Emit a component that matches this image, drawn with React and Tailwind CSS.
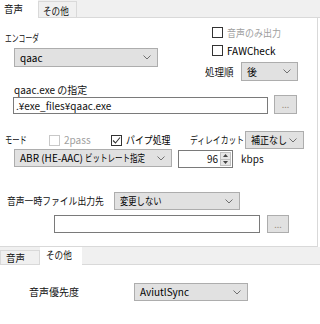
import React from "react";

const FONT = "font-['Noto_Sans_CJK_JP','Noto_Sans',sans-serif]";

function S({ s = "", children }) {
  return <span className={`inline-block origin-left whitespace-nowrap ${s}`}>{children}</span>;
}

function Chevron() {
  return (
    <svg width="8" height="5" viewBox="0 0 8 5" className="shrink-0">
      <path d="M0.5 0.5 L4 4 L7.5 0.5" fill="none" stroke="#707070" strokeWidth="1" />
    </svg>
  );
}

function Combo({ children, className = "" }) {
  return (
    <div
      className={`flex items-center border border-[#adadad] bg-[#e1e1e1] pl-[5px] pr-[6px] text-black leading-none ${className}`}
    >
      <div className="flex-1 min-w-0 whitespace-nowrap">{children}</div>
      <Chevron />
    </div>
  );
}

function Check({ checked, disabled, grayText, children, className = "" }) {
  return (
    <div className={`flex items-center gap-[4px] ${className}`}>
      <div
        className={`w-[11px] h-[11px] border bg-white flex items-center justify-center shrink-0 ${
          disabled ? "border-[#c8c8c8]" : "border-[#333333]"
        }`}
      >
        {checked && (
          <svg width="9" height="9" viewBox="0 0 9 9">
            <path d="M1 4.5 L3.5 7 L8 1.5" fill="none" stroke="#333" strokeWidth="1.1" />
          </svg>
        )}
      </div>
      <div className={`leading-none whitespace-nowrap ${disabled || grayText ? "text-[#a0a0a0]" : "text-black"}`}>
        {children}
      </div>
    </div>
  );
}

function Btn({ className = "" }) {
  return (
    <div
      className={`flex items-center justify-center border border-[#adadad] bg-[#e1e1e1] text-[#9a8f80] text-[9px] leading-none ${className}`}
    >
      ...
    </div>
  );
}

function Spin() {
  return (
    <div className="ml-[6px] mt-[1px] w-[55px] h-[18px] border border-[#7a7a7a] bg-white flex items-stretch">
      <div className="flex-1 flex items-center justify-end pr-[2px] leading-none">96</div>
      <div className="w-[11px] flex flex-col my-[1px] mr-[1px]">
        <div className="flex-1 bg-[#e6e6e6] border border-[#c0c0c0] flex items-center justify-center">
          <svg width="5" height="3" viewBox="0 0 5 3"><path d="M0 3 L2.5 0 L5 3Z" fill="#444" /></svg>
        </div>
        <div className="flex-1 bg-[#e6e6e6] border border-[#c0c0c0] border-t-0 flex items-center justify-center">
          <svg width="5" height="3" viewBox="0 0 5 3"><path d="M0 0 L2.5 3 L5 0Z" fill="#444" /></svg>
        </div>
      </div>
    </div>
  );
}

export default function App() {
  return (
    <div className={`w-[320px] h-[324px] bg-white text-[10px] text-[#111] overflow-hidden ${FONT}`}>
      {/* top tab strip */}
      <div className="h-[18px] flex bg-[#f0f0f0]">
        <div className="w-[38px] h-[18px] bg-white pl-[4px] pt-[3px] leading-[12px]">
          <S s="scale-x-[0.95]">音声</S>
        </div>
        <div className="flex-1 flex flex-col">
          <div className="flex h-[17px] mt-[1px]">
            <div className="w-[39px] border border-b-0 border-[#d9d9d9] bg-[#f0f0f0] pl-[4px] pt-[3px] leading-[12px]">
              <S s="scale-x-[0.86]">その他</S>
            </div>
          </div>
          <div className="h-0 border-t border-[#d9d9d9]" />
        </div>
      </div>

      {/* panel */}
      <div className="w-[318px] h-[229px] border-r border-b border-[#d9d9d9] bg-white">
        {/* row 1 */}
        <div className="flex h-[62px]">
          <div className="w-[205px] flex flex-col">
            <div className="mt-[14px] h-[12px] leading-[12px] pl-[5px]">
              <S s="scale-x-[0.68]">エンコーダ</S>
            </div>
            <Combo className="mt-[4px] ml-[14px] w-[144px] h-[19px]">qaac</Combo>
          </div>
          <div className="flex flex-col">
            <Check grayText className="mt-[9px] ml-[7px] h-[11px]">
              <S s="scale-x-[0.9]">音声のみ出力</S>
            </Check>
            <Check className="mt-[7px] ml-[7px] h-[11px]">FAWCheck</Check>
            <div className="flex items-center mt-[6px]">
              <span className="w-[36px] leading-none">
                <S s="scale-x-[0.95]">処理順</S>
              </span>
              <Combo className="w-[57px] h-[19px]">後</Combo>
            </div>
          </div>
        </div>

        {/* row 2 */}
        <div className="mt-[4px] h-[12px] leading-[12px] pl-[14px]">qaac.exe の指定</div>
        <div className="flex items-end mt-[-1px] h-[19px]">
          <div className="ml-[13px] w-[255px] h-[17px] border border-[#7a7a7a] bg-white flex items-center pl-[2px] leading-none">
            .¥exe_files¥qaac.exe
          </div>
          <Btn className="ml-[6px] w-[23px] h-[19px]" />
        </div>

        {/* row 3 */}
        <div className="flex items-center mt-[17px] h-[18px]">
          <span className="w-[49px] pl-[5px] leading-none">
            <S s="scale-x-[0.73]">モード</S>
          </span>
          <Check disabled className="w-[62px]">2pass</Check>
          <Check checked className="w-[79px]">
            <S s="scale-x-[0.89]">パイプ処理</S>
          </Check>
          <span className="w-[55px] leading-none">
            <S s="scale-x-[0.78]">ディレイカット</S>
          </span>
          <Combo className="w-[59px] h-[18px]">
            <S s="scale-x-[0.9]">補正なし</S>
          </Combo>
        </div>
        <div className="flex items-start h-[19px]">
          <Combo className="ml-[14px] w-[158px] h-[18px]">
            ABR (HE-AAC) <S s="scale-x-[0.75]">ビットレート指定</S>
          </Combo>
          <Spin />
          <span className="ml-[8px] mt-[5px] leading-none">kbps</span>
        </div>

        {/* row 4 */}
        <div className="flex items-center mt-[24px] h-[18px]">
          <span className="w-[114px] pl-[7px] leading-none">
            <S s="scale-x-[0.88]">音声一時ファイル出力先</S>
          </span>
          <Combo className="w-[126px] h-[18px]">
            <S s="scale-x-[0.83]">変更しない</S>
          </Combo>
        </div>
        <div className="flex mt-[5px]">
          <div className="ml-[54px] w-[206px] h-[18px] border border-[#7a7a7a] bg-white" />
          <Btn className="ml-[7px] w-[22px] h-[18px]" />
        </div>
      </div>

      {/* bottom tab strip */}
      <div className="h-[18px] flex items-end bg-[#f0f0f0] border-b border-[#d9d9d9]">
        <div className="w-[40px] h-[14px] border border-b-0 border-[#d9d9d9] bg-[#f0f0f0] pl-[5px] leading-[13px]">
          <S s="scale-x-[0.95]">音声</S>
        </div>
        <div className="w-[42px] h-[18px] bg-white pl-[6px] pt-[2px] leading-[12px] mb-[-1px]">
          <S s="scale-x-[0.86]">その他</S>
        </div>
      </div>

      {/* bottom content */}
      <div className="flex items-center mt-[18px] h-[18px]">
        <span className="w-[134px] pl-[29px] leading-none">音声優先度</span>
        <Combo className="w-[114px] h-[18px]">AviutlSync</Combo>
      </div>
    </div>
  );
}
